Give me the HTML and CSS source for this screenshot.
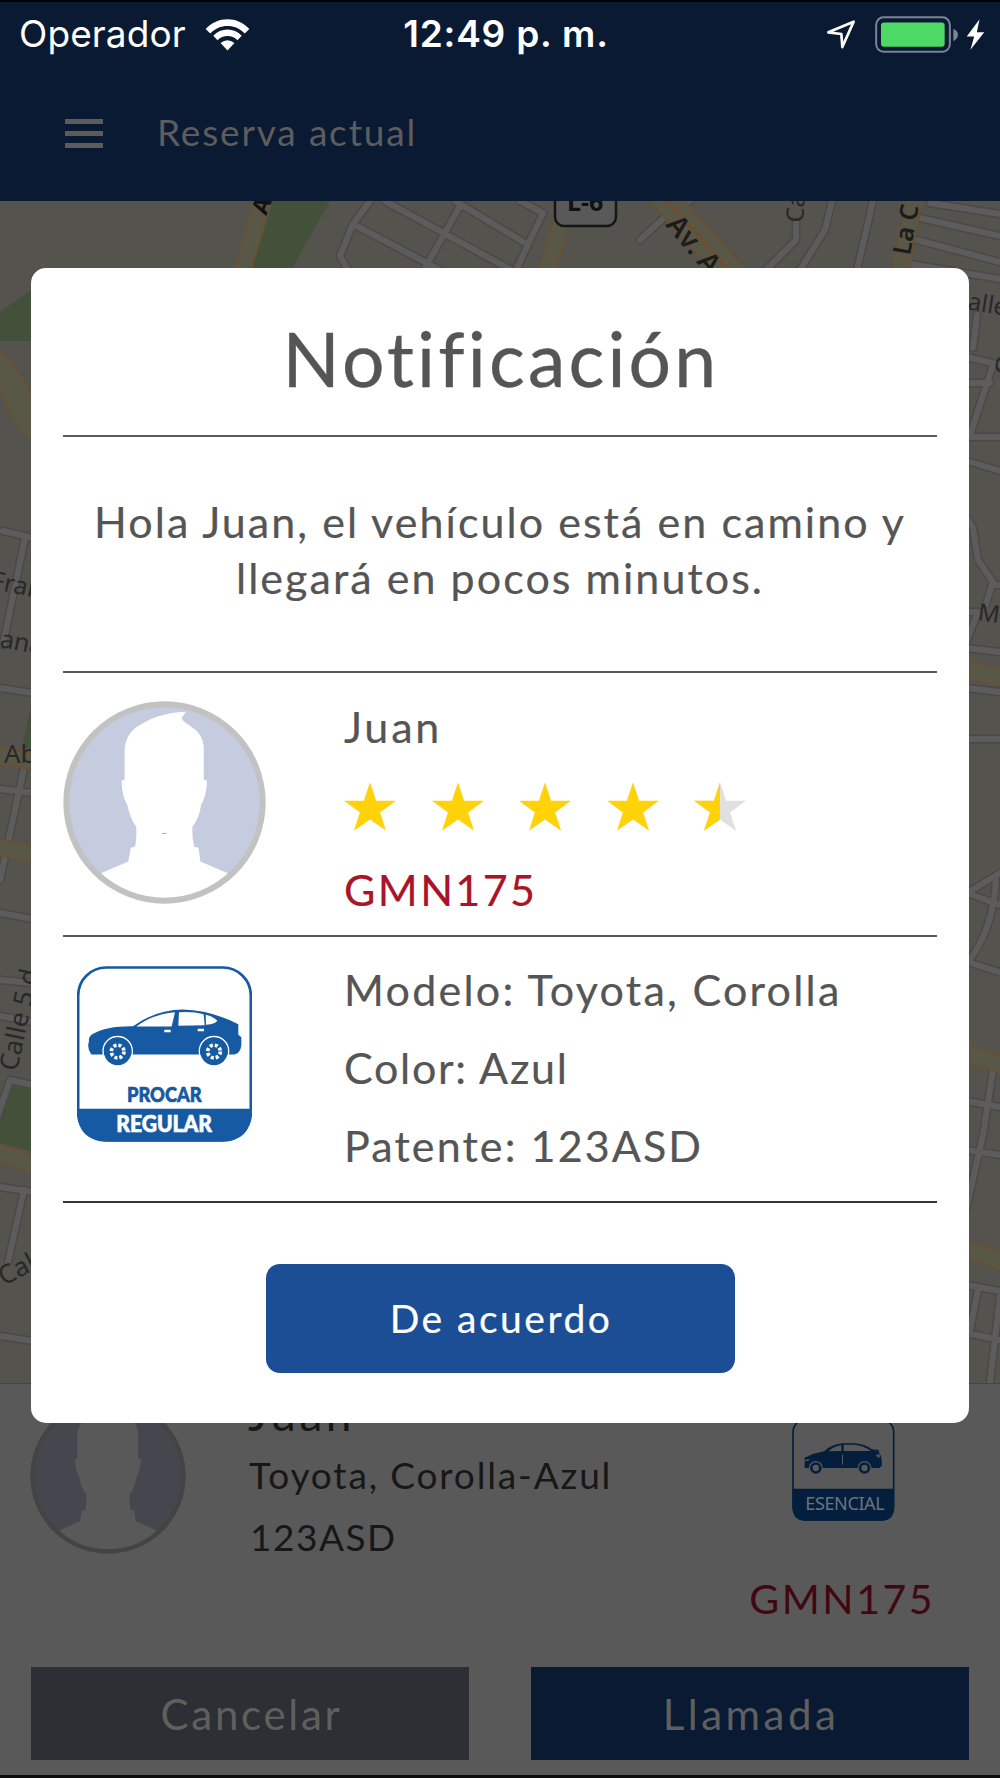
FILE: index.html
```html
<!DOCTYPE html>
<html lang="es">
<head>
<meta charset="utf-8">
<title>Reserva actual</title>
<link rel="stylesheet" href="styles.css">
</head>
<body>
<div class="app">
  <header class="top">
    <div class="status">
      <div class="status-left">
        <span class="carrier">Operador</span>
        <svg class="wifi" viewBox="612 50 136 98" width="45" height="33"><path d="M614 82C650 43 710 43 746 82L732 96C704 66 656 66 628 96ZM637 103C660 78 700 78 723 103L710 116C694 99 666 99 650 116ZM659 125Q680 107 701 125L680 147Z"/></svg>
      </div>
      <span class="clock">12:49 p. m.</span>
      <div class="status-right">
        <svg viewBox="978 58 90 90" width="30" height="30"><path class="loc" d="M985 98L1061 66L1027 142L1024 103Z"/></svg>
        <svg class="battery" viewBox="1124 46 252 110" width="84" height="37"><rect class="case" x="1127.5" y="49.500" width="221" height="103" rx="22"/><rect class="charge" x="1142" y="65" width="191" height="73" rx="9"/><path class="nub" d="M1359 84Q1373 90 1373 102T1359 121Z"/></svg>
        <svg class="bolt" viewBox="1398 54 56 92" width="19" height="31"><path d="M1438 55L1400 106H1422L1411 145L1452 93H1430Z"/></svg>
      </div>
    </div>
    <div class="bar">
      <div class="burger"><i></i><i></i><i></i></div>
      <h1 class="bar-title">Reserva actual</h1>
    </div>
  </header>

  <section class="map">
    <svg viewBox="0 201 1000 1182" width="1000" height="1182">
      <defs>
        <g id="streets">
          <path d="M370 201L353 224L340 256L348 270M353 224L440 270M385 201L515 272M455 201L525 243M460 206L425 268M520 201L543 213L517 268M640 240L666 216L690 201M796 222V240L766 270M832 201L825 230L800 270M873 201L857 270"/>
          <path d="M930 203L1000 214M920 218L1000 236M917 240L1000 262M910 264L1000 279M977 315L973 348M967 357L1000 365M967 383H990M992 368L970 435M967 437H1000M967 461L1000 471M967 518L973 528L978 560L995 585H1002M992 585L986 604M967 612H978L967 640M967 648L1000 652M967 688L1000 692M967 739H1000M967 893L1000 873M996 880Q993 930 968 962L1002 973M967 893L1000 905M967 1101L1000 1107M993 1070L983 1135L966 1210M967 1150L1000 1155M967 1285L1000 1291M978 1290L969 1335M967 1333L1000 1340M1000 1295L990 1383"/>
          <path d="M3 531L33 538M25 538L3 645M0 688L33 693M0 789L33 793M24 768L0 880M0 913L33 919M0 980L33 983M0 1016L33 1022M33 1085L10 1080L-3 1118M0 1187L33 1192M24 1190L8 1262M0 1336L33 1341"/>
        </g>
        <g id="avenues">
          <path d="M262 201L242 272M567 201L547 272M900 272L914 201M966 669L1002 678M966 1054L1002 1064M966 1249L1002 1261M0 756L33 761M0 847L33 855M0 1153L33 1164"/>
        </g>
        <g id="boulevards"><path d="M662 195L735 277M-3 366L12 385L24 412L36 426"/></g>
      </defs>
      <path class="park" d="M273 201H330L291 270H252ZM0 312L33 289V341H0ZM33 697L22 748H33ZM8 1086H33V1152L0 1143V1115Z"/>
      <use href="#streets" class="st-edge"/><use href="#streets" class="st-fill"/>
      <use href="#avenues" class="av-edge"/><use href="#avenues" class="av-fill"/>
      <use href="#boulevards" class="bl-edge"/><use href="#boulevards" class="bl-fill"/>
      <path class="median" d="M662 195L735 277"/>
      <g class="labels">
        <rect class="shield" x="555" y="186" width="61" height="40" rx="9"/>
        <text class="bold" x="567" y="211" font-size="25">L-6</text>
        <text class="bold" transform="translate(266 216) rotate(-68)" font-size="23">A</text>
        <text class="semi" transform="translate(665 225) rotate(50)" font-size="28">Av. A</text>
        <text transform="translate(803 223) rotate(-86)" font-size="24">Ca</text>
        <text class="semi" transform="translate(910 256) rotate(-80)" font-size="25">La C</text>
        <text transform="translate(952 307) rotate(9)" font-size="24">Calle</text>
        <text transform="translate(993 371) rotate(10)" font-size="23">C</text>
        <text transform="translate(977 620) rotate(8)" font-size="24">M</text>
        <text transform="translate(-10 588) rotate(12)" font-size="25">Fran</text>
        <text transform="translate(-1 647) rotate(10)" font-size="25">ana</text>
        <text x="4" y="763" font-size="26">Ab</text>
        <text transform="translate(17 1072) rotate(-78)" font-size="26">Calle 5 d</text>
        <text transform="translate(4 1286) rotate(-28)" font-size="26">Cal</text>
      </g>
    </svg>
  </section>

  <section class="panel">
    <div class="trip">
      <svg class="avatar avatar-dim" viewBox="188 63 610 610" width="156" height="156"><use href="#person"/></svg>
      <div class="trip-info">
        <div class="trip-name">Juan</div>
        <div class="trip-car">Toyota, Corolla-Azul</div>
        <div class="trip-plate">123ASD</div>
      </div>
      <div class="trip-side">
        <svg class="essential" viewBox="124 9 308 309" width="102.700" height="103">
          <rect class="line" x="127" y="12" width="302" height="303" rx="40"/>
          <path d="M126 221H430V278Q430 317 391 317H165Q126 317 126 278Z"/>
          <path d="M162 128Q190 114 220 109Q240 89 275 85H312Q345 88 364 103L384 105L386 115Q395 124 393 154L385 159H162Z"/>
          <path class="glass" d="M234 109Q248 94 272 90V108ZM279 89H312Q338 92 355 104L360 108H279ZM376 120L387 117V128L379 126ZM162 135L178 132L172 138H162Z"/>
          <path class="slit" d="M275.500 119V149"/>
          <circle class="rim" cx="195.500" cy="159" r="21"/><circle class="rim" cx="341.500" cy="159" r="21"/>
          <circle class="wheel" cx="195.500" cy="159" r="13.500"/><circle class="wheel" cx="341.500" cy="159" r="13.500"/>
          <text x="164" y="286" textLength="238">ESENCIAL</text>
        </svg>
        <div class="code-dim">GMN175</div>
      </div>
    </div>
    <div class="actions">
      <button class="act cancel">Cancelar</button>
      <button class="act call">Llamada</button>
    </div>
  </section>
</div>

<div class="overlay">
  <div class="modal" role="dialog">
    <h2 class="title">Notificación</h2>
    <p class="message">Hola Juan, el vehículo está en camino y<br>llegará en pocos minutos.</p>
    <div class="driver">
      <svg class="avatar" viewBox="188 63 610 610" width="203" height="203">
        <defs>
          <g id="person">
            <circle class="disc" cx="493" cy="368" r="295"/>
            <path class="body" d="M557 95Q470 97 404 145Q373 172 373 212V300L364 303Q365 350 381 375Q390 418 408 441Q410 480 404 501L392 504L384 545L290 586Q370 664 493 664T695 586L601 545L595 504L582 501Q575 470 577 441Q598 415 603 375Q619 350 621 303L611 300V200Q608 160 570 138Q543 120 545 113Z"/>
            <circle class="ring" cx="493" cy="368" r="295"/>
          </g>
        </defs>
        <use href="#person"/>
        <path class="chin" d="M486 461H499"/>
      </svg>
      <div class="driver-info">
        <div class="name">Juan</div>
        <div class="stars">
          <svg viewBox="133 301 157 146" width="52" height="49"><path id="star" d="M211.500 301L230 357H290L242 392L260 447L211.500 413L163 447L181 392L133 357H193Z"/></svg>
          <svg viewBox="133 301 157 146" width="52" height="49"><use href="#star"/></svg>
          <svg viewBox="133 301 157 146" width="52" height="49"><use href="#star"/></svg>
          <svg viewBox="133 301 157 146" width="52" height="49"><use href="#star"/></svg>
          <svg viewBox="133 301 157 146" width="52" height="49"><use href="#star" class="off"/><path d="M211.500 301V413L163 447L181 392L133 357H193Z"/></svg>
        </div>
        <div class="code">GMN175</div>
      </div>
    </div>
    <div class="vehicle">
      <svg class="badge" viewBox="232 857 525 527" width="175" height="176">
        <rect class="line" x="235.500" y="861" width="518" height="519" rx="84"/>
        <path d="M233 1285H756V1298Q752 1380 670 1383H320Q236 1380 233 1298Z"/>
        <path d="M268 1082Q266 1068 280 1060Q320 1036 400 1037Q470 987 550 987Q630 988 716 1031V1063L725 1070V1095Q722 1118 704 1122H275Q261 1104 268 1082Z"/>
        <path class="glass" d="M410 1038Q460 1000 526 995L516 1038ZM538 995Q580 992 612 1001L615 1034L536 1036ZM618 1003Q640 1008 653 1020Q650 1030 619 1033ZM494 1048H513V1055H494ZM594 1045H613V1052H594Z"/>
        <circle class="arch" cx="354" cy="1112" r="44"/><circle class="arch" cx="643" cy="1112" r="44"/>
        <path class="under" d="M300 1124H410V1165H300ZM590 1124H700V1165H590Z"/>
        <circle cx="354" cy="1113" r="41"/><circle cx="643" cy="1113" r="41"/>
        <circle class="spokes" cx="354" cy="1113" r="19"/><circle class="spokes" cx="643" cy="1113" r="19"/>
        <text class="brand" x="382" y="1263" textLength="224" lengthAdjust="spacingAndGlyphs">PROCAR</text>
        <text class="tier" x="350" y="1354" textLength="287" lengthAdjust="spacingAndGlyphs">REGULAR</text>
      </svg>
      <div class="vehicle-info">
        <div class="model">Modelo: Toyota, Corolla</div>
        <div class="color">Color: Azul</div>
        <div class="plate">Patente: 123ASD</div>
      </div>
    </div>
    <button class="ok">De acuerdo</button>
  </div>
</div>
</body>
</html>
```
FILE: styles.css
```css
* { box-sizing: border-box; }
body { margin: 0; width: 1000px; height: 1778px; overflow: hidden; position: relative; font-family: Lato, "Noto Sans", sans-serif; background: #595959; }
svg { display: block; flex: none; }
button { border: 0; padding: 0; font: inherit; letter-spacing: inherit; }
.app { display: flex; flex-direction: column; height: 1778px; border-bottom: 3px solid #0c0c0c; }

.top { height: 201px; flex: none; background: #0a1a33; border-top: 2px solid #000; color: #fff; }
.status { display: grid; grid-template-columns: 1fr auto 1fr; align-items: center; height: 64px; padding: 0 15px 0 19px; font: 37px/64px Inter, sans-serif; }
.status-left, .status-right { display: flex; align-items: center; }
.carrier { letter-spacing: .1px; }
.wifi { margin-left: 19px; fill: #fff; }
.clock { margin-left: 8px; font-weight: 600; letter-spacing: .8px; }
.status-right { justify-content: flex-end; }
.loc { fill: none; stroke: #fff; stroke-width: 8; stroke-linejoin: round; }
.battery { margin-left: 19px; }
.case { fill: none; stroke: #7b8494; stroke-width: 6; }
.charge { fill: #4cd964; }
.nub { fill: #7b8494; }
.bolt { margin-left: 7px; fill: #fff; }
.bar { display: flex; align-items: center; height: 135px; padding: 0 0 1px 65px; color: #5d5d5d; }
.burger { display: flex; flex-direction: column; gap: 7px; width: 38px; margin-right: 54px; }
.burger i { height: 5px; background: #5d5c5b; }
.bar-title { margin: 0 0 4px; font-weight: 400; font-size: 37px; letter-spacing: 1.85px; }

.map { height: 1182px; flex: none; background: #54534e; }
.park { fill: #43513a; }
use { stroke-linejoin: round; stroke-linecap: round; }
.st-edge, .av-edge, .bl-edge, .st-fill, .av-fill, .bl-fill { fill: none; }
.st-edge { stroke: #4b4946; stroke-width: 9; }
.st-fill { stroke: #5d5c5c; stroke-width: 6; }
.av-edge { stroke: #6c4f31; stroke-width: 18; }
.av-fill { stroke: #595846; stroke-width: 15; }
.bl-edge { stroke: #6c4f31; stroke-width: 28; }
.bl-fill { stroke: #595846; stroke-width: 25; }
.median { fill: none; stroke: #6b4f35; stroke-width: 4; }
.labels { font-family: "Noto Sans", sans-serif; fill: #282828; }
.bold { font-weight: 700; fill: #111; }
.semi { font-weight: 600; fill: #1c1c1c; }
.shield { fill: #595959; stroke: #161616; stroke-width: 2.5; }

.panel { flex: 1; border-top: 1px solid #454545; background: #595959; padding: 0 31px; }
.trip { display: flex; height: 283px; color: #171717; }
.avatar .disc { fill: #c5cce0; }
.avatar .body { fill: #fff; }
.avatar .ring { fill: none; stroke: #c2c2c2; stroke-width: 18; }
.avatar .chin { stroke: #aaa; stroke-width: 3; }
.avatar-dim { margin: 14px 0 0 -1px; filter: brightness(.35); }
.trip-info { margin-left: 63px; font-size: 37px; line-height: 61px; }
.trip-name { height: 61px; line-height: 59px; font-size: 46px; letter-spacing: 3.5px; margin-left: -1px; }
.trip-car { margin-top: -1px; letter-spacing: 1.85px; }
.trip-plate { margin: 1px 0 0 1px; letter-spacing: 1.5px; }
.trip-side { display: flex; flex-direction: column; align-items: center; margin: 34px 34px 0 auto; }
.essential { margin-left: 3px; fill: #041e3d; }
.line { fill: none; }
.essential .line { stroke: #041e3d; stroke-width: 5; }
.essential .glass, .essential .rim { fill: #595959; }
.essential .slit { stroke: #595959; stroke-width: 3; }
.essential .wheel { fill: #595959; stroke: #041e3d; stroke-width: 8; }
.essential text { font: 54px "Noto Sans", sans-serif; fill: #6b747e; }
.code-dim { margin-top: 48px; font-size: 41px; line-height: 60px; color: #400811; letter-spacing: 2.5px; }
.actions { display: grid; grid-template-columns: 1fr 1fr; gap: 62px; }
.act { height: 93px; font-size: 42px; color: #5f5f5f; }
.cancel { background: #2c2f34; padding-left: 3px; letter-spacing: 2.7px; }
.call { background: #0a1a33; padding-left: 2px; letter-spacing: 3.5px; }

.overlay { position: absolute; left: 0; top: 0; width: 1000px; height: 1778px; padding: 268px 31px 0; }
.modal { height: 1155px; padding: 0 32px; background: #fff; border-radius: 15px; color: #555; font-size: 43px; -webkit-text-stroke: .2px; }
.title { margin: 0 -10px 0 -8px; height: 167px; padding-top: 13px; text-align: center; font-weight: 400; font-size: 75px; line-height: 154px; letter-spacing: 3.2px; -webkit-text-stroke: .4px; }
.message { margin: 0; padding: 57px 0 0; height: 236px; border-top: 2px solid #5a5a5a; text-align: center; line-height: 56px; letter-spacing: 2.05px; }
.driver { display: flex; height: 266px; padding-top: 28px; border-top: 2px solid #5a5a5a; border-bottom: 2px solid #5a5a5a; }
.driver-info { margin-left: 78px; line-height: 50px; }
.name { margin-top: 1px; letter-spacing: 2.8px; }
.stars { display: flex; gap: 35.500px; margin: 30px 0 34px; }
.stars svg { fill: #ffd20a; }
.off { fill: #e0e0e0; }
.code { color: #a91427; letter-spacing: 2.4px; }
.vehicle { display: flex; height: 266px; border-bottom: 2px solid #333; }
.badge { margin: 29px 92px 0 14px; fill: #155aa3; -webkit-text-stroke: 0; }
.badge .line { stroke: #155aa3; stroke-width: 8; }
.badge .glass, .badge .under { fill: #fff; }
.badge .arch { stroke: #fff; stroke-width: 4; }
.badge .spokes { fill: none; stroke: #fff; stroke-width: 11; stroke-dasharray: 9 5.920; }
.brand { font: 900 63px Lato, sans-serif; letter-spacing: 0; stroke: #155aa3; stroke-width: 2; }
.tier { font: 900 68px Lato, sans-serif; letter-spacing: 0; fill: #fff; stroke: #fff; stroke-width: 2; }
.vehicle-info { margin-top: 14px; line-height: 78px; }
.model { letter-spacing: 2.25px; }
.color { letter-spacing: 1.7px; }
.plate { letter-spacing: 2.1px; }
.ok { display: block; width: 469px; height: 109px; margin: 61px auto 0; padding: 0 0 2px 2px; border-radius: 14px; background: #1c4e96; color: #fff; font-size: 39px; letter-spacing: 2.5px; }
```
